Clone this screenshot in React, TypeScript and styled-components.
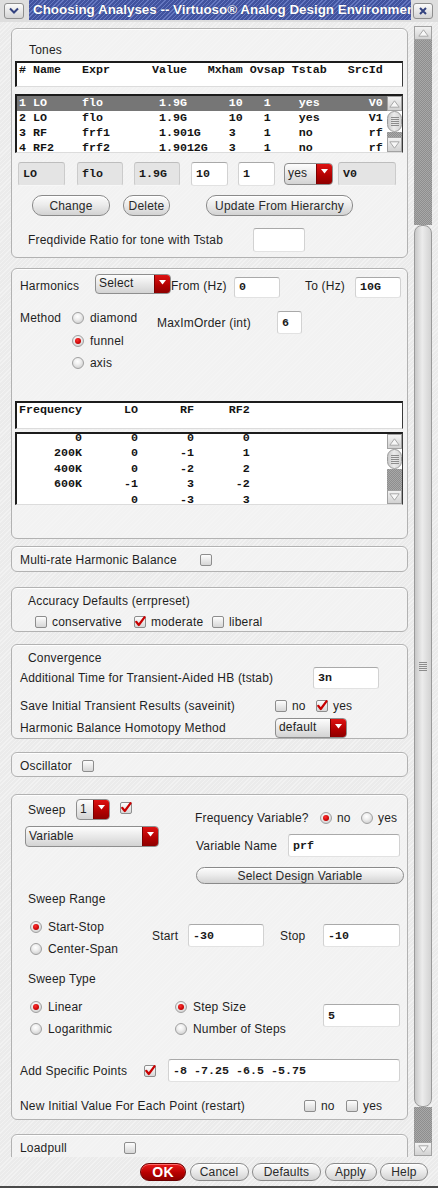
import React from 'react';
import styled, { createGlobalStyle } from 'styled-components';

const SANS = `"Liberation Sans", Arial, Helvetica, sans-serif`;
const MONO = `"Liberation Mono", "Courier New", monospace`;

const GlobalStyle = createGlobalStyle`
  html, body { margin: 0; padding: 0; }
  body { width: 438px; height: 1188px; overflow: hidden; background: #e9e9e9; font-family: ${SANS}; }
  *, *::before, *::after { box-sizing: border-box; }
`;

const Window = styled.div`
  width: 438px;
  height: 1188px;
  display: flex;
  flex-direction: column;
  background-color: #ebebeb;
  background-image: repeating-linear-gradient(135deg, rgba(255,255,255,0.35) 0 1px, transparent 1px 3px);
  border-bottom: 2px solid #4a4a4a;
  overflow: hidden;
`;

const TitleBar = styled.div`
  height: 22px;
  flex: none;
  display: flex;
  align-items: flex-start;
  padding-left: 4px;
  background: #dedede;
`;

const FrameBtn = styled.div<{ $ml?: number }>`
  margin-top: 3px;
  margin-left: ${p => p.$ml ?? 0}px;
  width: 20px;
  height: 16px;
  flex: none;
  border: 1px solid #8f8f8f;
  border-radius: 3px;
  background: linear-gradient(#fbfbfb, #d4d4d4);
  display: flex;
  align-items: center;
  justify-content: center;
`;

const TitleText = styled.div`
  margin-left: 5px;
  width: 382px;
  height: 20px;
  flex: none;
  background-color: #41539f;
  background-image: repeating-linear-gradient(135deg, #6577c0 0 1px, #41539f 1px 3px);
  color: #fff;
  font: bold 13.4px ${SANS};
  line-height: 20px;
  padding-left: 4px;
  white-space: nowrap;
  overflow: hidden;
  text-shadow: 0 0 1px #1d2a66;
`;

const Main = styled.div`
  display: flex;
  height: 1135px;
  flex: none;
`;

const Content = styled.div`
  width: 414px;
  flex: none;
  padding: 6px 0 0 11px;
  overflow: hidden;
  display: flex;
  flex-direction: column;
`;

const Group = styled.div<{ $mt: number; $h: number }>`
  flex: none;
  width: 397px;
  height: ${p => p.$h}px;
  margin-top: ${p => p.$mt}px;
  border: 1px solid #b2b2b2;
  border-radius: 6px;
  background: rgba(245, 245, 245, 0.7);
  box-shadow: inset 0 1px 0 rgba(255, 255, 255, 0.9);
  display: flex;
  flex-direction: column;
`;

const Row = styled.div<{ $mt?: number; $h: number; $pl?: number; $align?: string }>`
  display: flex;
  flex: none;
  align-items: ${p => p.$align ?? 'center'};
  margin-top: ${p => p.$mt ?? 0}px;
  height: ${p => p.$h}px;
  padding-left: ${p => p.$pl ?? 0}px;
`;

const Col = styled.div<{ $w?: number }>`
  display: flex;
  flex-direction: column;
  flex: none;
  ${p => (p.$w ? `width: ${p.$w}px;` : 'flex: 1;')}
`;

const Cell = styled.div<{ $w?: number; $h?: number; $mt?: number; $mb?: number }>`
  display: flex;
  align-items: center;
  flex: none;
  ${p => (p.$w ? `width: ${p.$w}px;` : '')}
  ${p => (p.$h ? `height: ${p.$h}px;` : '')}
  margin-top: ${p => p.$mt ?? 0}px;
  margin-bottom: ${p => p.$mb ?? 0}px;
`;

const Label = styled.span`
  font: 12px ${SANS};
  letter-spacing: 0.2px;
  color: #1f1f1f;
  white-space: nowrap;
`;

const Field = styled.div<{ $w: number; $h: number; $ro?: boolean }>`
  width: ${p => p.$w}px;
  height: ${p => p.$h}px;
  flex: none;
  background: ${p => (p.$ro ? '#e4e4e4' : '#ffffff')};
  border: 1px solid ${p => (p.$ro ? '#cbcbcb' : '#d2d2d2')};
  border-top-color: ${p => (p.$ro ? '#bdbdbd' : '#a9a9a9')};
  border-bottom-color: ${p => (p.$ro ? '#f7f7f7' : '#e2e2e2')};
  border-radius: 3px;
  font: bold 11.67px ${MONO};
  color: #1a1a1a;
  padding-left: 4px;
  display: flex;
  align-items: center;
  white-space: pre;
  overflow: hidden;
`;

const BoxEl = styled.span`
  width: 12px;
  height: 12px;
  flex: none;
  border: 1px solid #8d8d8d;
  border-radius: 2px;
  background: linear-gradient(#fdfdfd, #d6d6d6);
  display: inline-flex;
  align-items: center;
  justify-content: center;
  overflow: visible;
`;

const RadioEl = styled.span<{ $on?: boolean }>`
  width: 12px;
  height: 12px;
  flex: none;
  border-radius: 50%;
  border: 1px solid #a0a0a0;
  background: radial-gradient(circle at 45% 35%, #ffffff 0, #f0f0f0 35%, #c4c4c4 100%);
  display: inline-flex;
  align-items: center;
  justify-content: center;
  &::after {
    content: '';
    display: ${p => (p.$on ? 'block' : 'none')};
    width: 6px;
    height: 6px;
    border-radius: 50%;
    background: radial-gradient(circle at 40% 35%, #ff3030, #c00000 70%);
  }
`;

const Opt = styled.span<{ $gap?: number }>`
  display: inline-flex;
  align-items: center;
  gap: ${p => p.$gap ?? 5}px;
`;

const Btn = styled.div<{ $w: number; $h: number; $primary?: boolean }>`
  width: ${p => p.$w}px;
  height: ${p => p.$h}px;
  flex: none;
  border-radius: 10px;
  border: 1px solid ${p => (p.$primary ? '#6a0000' : '#8a8a8a')};
  background: ${p =>
    p.$primary
      ? 'linear-gradient(#ea1a1a, #b80000 55%, #8c0000)'
      : 'linear-gradient(#fcfcfc, #ececec 45%, #d2d2d2)'};
  box-shadow: inset 0 1px 0 ${p => (p.$primary ? '#ff6a6a' : '#ffffff')};
  display: flex;
  align-items: center;
  justify-content: center;
  font: ${p => (p.$primary ? 'bold 14px' : '12px')} ${SANS};
  letter-spacing: 0.2px;
  color: ${p => (p.$primary ? '#ffffff' : '#2a2a2a')};
  white-space: nowrap;
`;

const ComboEl = styled.div<{ $w: number; $h: number }>`
  width: ${p => p.$w}px;
  height: ${p => p.$h}px;
  flex: none;
  display: flex;
  border: 1px solid #8e8e8e;
  border-radius: 4px;
  overflow: hidden;
  background: linear-gradient(#fdfdfd, #e8e8e8 50%, #d3d3d3);
`;

const ComboText = styled.span`
  flex: 1;
  padding-left: 3px;
  padding-bottom: 2px;
  display: flex;
  align-items: center;
  font: 12px ${SANS};
  letter-spacing: 0.2px;
  color: #1f1f1f;
  white-space: nowrap;
  overflow: hidden;
`;

const ComboArrow = styled.span`
  width: 16px;
  flex: none;
  display: flex;
  align-items: flex-start;
  justify-content: center;
  padding-top: 5px;
  background: linear-gradient(#de1212, #b00000 60%, #8e0000);
  border-left: 1px solid #7a0000;
`;

const Sunken = styled.div<{ $mt: number; $h: number }>`
  margin-top: ${p => p.$mt}px;
  margin-left: 3px;
  width: 388px;
  height: ${p => p.$h}px;
  flex: none;
  display: flex;
  background: #ffffff;
  border-top: 2px solid #1c1c1c;
  border-left: 2px solid #1c1c1c;
  border-right: 1px solid #3a3a3a;
  border-bottom: 1px solid #dcdcdc;
  overflow: hidden;
`;

const ListRows = styled.div<{ $shift?: number }>`
  flex: 1;
  display: flex;
  flex-direction: column;
  overflow: hidden;
  margin-top: ${p => p.$shift ?? 0}px;
`;

const ListRow = styled.div<{ $sel?: boolean; $h: number }>`
  flex: none;
  height: ${p => p.$h}px;
  padding-left: 2px;
  white-space: pre;
  font: bold 11.67px ${MONO};
  line-height: ${p => p.$h}px;
  background: ${p => (p.$sel ? '#767676' : 'transparent')};
  color: ${p => (p.$sel ? '#ffffff' : '#141414')};
`;

const ScrollCol = styled.div<{ $w: number }>`
  width: ${p => p.$w}px;
  flex: none;
  display: flex;
  flex-direction: column;
`;

const ArrowBtn = styled.div<{ $h: number }>`
  height: ${p => p.$h}px;
  flex: none;
  border: 1px solid #a2a2a2;
  background: linear-gradient(#f2f2f2, #d2d2d2);
  display: flex;
  align-items: center;
  justify-content: center;
`;

const Trough = styled.div<{ $h?: number }>`
  ${p => (p.$h !== undefined ? `height: ${p.$h}px; flex: none;` : 'flex: 1;')}
  background: repeating-conic-gradient(#8e8e8e 0 25%, #a8a8a8 0 50%) 0 0 / 2px 2px;
`;

const Thumb = styled.div<{ $h: number }>`
  height: ${p => p.$h}px;
  flex: none;
  border: 1px solid #9a9a9a;
  border-radius: 8px;
  background: linear-gradient(90deg, #c8c8c8, #ececec 45%, #d2d2d2);
  display: flex;
  align-items: center;
  justify-content: center;
`;

const VScroll = styled.div`
  width: 18px;
  flex: none;
  margin-top: 4px;
  height: 1130px;
  display: flex;
  flex-direction: column;
`;

const Footer = styled.div`
  height: 29px;
  flex: none;
  display: flex;
  justify-content: flex-end;
  align-items: flex-start;
  padding: 6px 10px 0 0;
  gap: 3.5px;
`;

/* ---------- small drawings ---------- */

const CheckMark = () => (
  <svg width="12" height="12" viewBox="0 0 12 12" style={{ overflow: 'visible' }}>
    <path d="M2.2 5.8 L4.8 9 L10.6 1.2" fill="none" stroke="#c80000" strokeWidth="2.2" strokeLinecap="round" strokeLinejoin="round" />
  </svg>
);

const CheckBox = ({ on }: { on?: boolean }) => <BoxEl>{on && <CheckMark />}</BoxEl>;

const Radio = ({ on }: { on?: boolean }) => <RadioEl $on={on} />;

const DownTri = () => (
  <svg width="7" height="5" viewBox="0 0 7 5">
    <polygon points="0,0 7,0 3.5,4.5" fill="#ffffff" />
  </svg>
);

const Combo = ({ w, h, text }: { w: number; h: number; text: string }) => (
  <ComboEl $w={w} $h={h}>
    <ComboText>{text}</ComboText>
    <ComboArrow>
      <DownTri />
    </ComboArrow>
  </ComboEl>
);

const TriUp = () => (
  <svg width="11" height="8" viewBox="0 0 11 8">
    <polygon points="5.5,0.8 10.2,7.2 0.8,7.2" fill="#f7f7f7" stroke="#a9a9a9" strokeWidth="1" />
  </svg>
);
const TriDown = () => (
  <svg width="11" height="8" viewBox="0 0 11 8">
    <polygon points="0.8,0.8 10.2,0.8 5.5,7.2" fill="#f7f7f7" stroke="#a9a9a9" strokeWidth="1" />
  </svg>
);

const Grip = () => (
  <svg width="8" height="9" viewBox="0 0 8 9">
    {[0.5, 2.5, 4.5, 6.5, 8.5].map(y => (
      <line key={y} x1="0" x2="8" y1={y} y2={y} stroke="#8c8c8c" strokeWidth="1" />
    ))}
  </svg>
);

const MiniScroll = ({ up, thumb, before, down }: { up: number; thumb: number; before: number; down: number }) => (
  <ScrollCol $w={15}>
    <ArrowBtn $h={up}>
      <TriUp />
    </ArrowBtn>
    {before > 0 && <Trough $h={before} />}
    <Thumb $h={thumb}>
      <Grip />
    </Thumb>
    <Trough />
    <ArrowBtn $h={down}>
      <TriDown />
    </ArrowBtn>
  </ScrollCol>
);

/* ---------- data ---------- */

const place = (cols: [number, string][]) => {
  let s = '';
  for (const [c, t] of cols) s = s.padEnd(c, ' ') + t;
  return s;
};

const tonesHeader = place([
  [0, '#'], [2, 'Name'], [9, 'Expr'], [19, 'Value'], [27, 'Mxham'], [33, 'Ovsap'], [39, 'Tstab'], [47, 'SrcId'],
]);

const tones = [
  ['1', 'LO', 'flo', '1.9G', '10', '1', 'yes', 'V0'],
  ['2', 'LO', 'flo', '1.9G', '10', '1', 'yes', 'V1'],
  ['3', 'RF', 'frf1', '1.901G', '3', '1', 'no', 'rf'],
  ['4', 'RF2', 'frf2', '1.9012G', '3', '1', 'no', 'rf'],
].map(r => place([[0, r[0]], [2, r[1]], [9, r[2]], [20, r[3]], [30, r[4]], [35, r[5]], [40, r[6]], [50, r[7]]]));

const freqHeader = 'Frequency' + 'LO'.padStart(8) + 'RF'.padStart(8) + 'RF2'.padStart(8);
const freqRows = [
  ['0', '0', '0', '0'],
  ['200K', '0', '-1', '1'],
  ['400K', '0', '-2', '2'],
  ['600K', '-1', '3', '-2'],
  ['', '0', '-3', '3'],
].map(r => r[0].padStart(9) + r[1].padStart(8) + r[2].padStart(8) + r[3].padStart(8));

/* ---------- sections ---------- */

const TonesGroup = () => (
  <Group $mt={0} $h={230}>
    <Row $mt={14} $h={14} $pl={17}>
      <Label>Tones</Label>
    </Row>
    <Sunken $mt={4} $h={26}>
      <ListRows>
        <ListRow $h={14}>{tonesHeader}</ListRow>
      </ListRows>
    </Sunken>
    <Sunken $mt={7} $h={59}>
      <ListRows>
        {tones.map((t, i) => (
          <ListRow key={i} $h={15} $sel={i === 0}>
            {t}
          </ListRow>
        ))}
      </ListRows>
      <MiniScroll up={15} before={0} thumb={21} down={15} />
    </Sunken>
    <Row $mt={9} $h={24} $pl={6}>
      <Cell $w={59}><Field $w={47} $h={24} $ro>LO</Field></Cell>
      <Cell $w={57}><Field $w={46} $h={24} $ro>flo</Field></Cell>
      <Cell $w={57}><Field $w={46} $h={24} $ro>1.9G</Field></Cell>
      <Cell $w={47}><Field $w={37} $h={24}>10</Field></Cell>
      <Cell $w={46}><Field $w={37} $h={24}>1</Field></Cell>
      <Cell $w={54}><Combo w={49} h={22} text="yes" /></Cell>
      <Field $w={58} $h={24} $ro>V0</Field>
    </Row>
    <Row $mt={9} $h={21} $pl={20}>
      <Cell $w={91}><Btn $w={78} $h={21}>Change</Btn></Cell>
      <Cell $w={83}><Btn $w={47} $h={21}>Delete</Btn></Cell>
      <Btn $w={147} $h={21}>Update From Hierarchy</Btn>
    </Row>
    <Row $mt={12} $h={24} $pl={16}>
      <Cell $w={225}><Label>Freqdivide Ratio for tone with Tstab</Label></Cell>
      <Field $w={52} $h={24} />
    </Row>
  </Group>
);

const HarmonicsGroup = () => (
  <Group $mt={10} $h={271}>
    <Row $mt={5} $h={24} $pl={8}>
      <Cell $w={75}><Label>Harmonics</Label></Cell>
      <Cell $w={76} $mb={4}><Combo w={76} h={20} text="Select" /></Cell>
      <Cell $w={63}><Label>From (Hz)</Label></Cell>
      <Cell $w={71} $mt={2}><Field $w={46} $h={21}>0</Field></Cell>
      <Cell $w={50}><Label>To (Hz)</Label></Cell>
      <Cell $mt={2}><Field $w={46} $h={21}>10G</Field></Cell>
    </Row>
    <Row $mt={9} $h={67} $pl={8} $align="flex-start">
      <Cell $w={52} $h={22}><Label>Method</Label></Cell>
      <Col $w={85}>
        <Cell $h={22.5}><Opt $gap={6}><Radio /><Label>diamond</Label></Opt></Cell>
        <Cell $h={22.5}><Opt $gap={6}><Radio on /><Label>funnel</Label></Opt></Cell>
        <Cell $h={22.5}><Opt $gap={6}><Radio /><Label>axis</Label></Opt></Cell>
      </Col>
      <Cell $w={120} $h={23} $mt={4}><Label>MaxImOrder (int)</Label></Cell>
      <Cell $mt={4}><Field $w={25} $h={23}>6</Field></Cell>
    </Row>
    <Sunken $mt={27} $h={28}>
      <ListRows>
        <ListRow $h={14}>{freqHeader}</ListRow>
      </ListRows>
    </Sunken>
    <Sunken $mt={3} $h={73}>
      <ListRows $shift={-3}>
        {freqRows.map((r, i) => (
          <ListRow key={i} $h={15.4}>
            {r}
          </ListRow>
        ))}
      </ListRows>
      <MiniScroll up={15} before={0} thumb={20} down={14} />
    </Sunken>
  </Group>
);

const MultiRateGroup = () => (
  <Group $mt={7} $h={26}>
    <Row $mt={2} $h={22} $pl={8}>
      <Cell $w={180}><Label>Multi-rate Harmonic Balance</Label></Cell>
      <CheckBox />
    </Row>
  </Group>
);

const AccuracyGroup = () => (
  <Group $mt={15} $h={45}>
    <Row $mt={6} $h={14} $pl={16}>
      <Label>Accuracy Defaults (errpreset)</Label>
    </Row>
    <Row $mt={7} $h={14} $pl={23}>
      <Cell $w={99}><Opt><CheckBox /><Label>conservative</Label></Opt></Cell>
      <Cell $w={78}><Opt><CheckBox on /><Label>moderate</Label></Opt></Cell>
      <Opt><CheckBox /><Label>liberal</Label></Opt>
    </Row>
  </Group>
);

const ConvergenceGroup = () => (
  <Group $mt={12} $h={95}>
    <Row $mt={6} $h={14} $pl={16}>
      <Label>Convergence</Label>
    </Row>
    <Row $mt={2} $h={22} $pl={8}>
      <Cell $w={293}><Label>Additional Time for Transient-Aided HB (tstab)</Label></Cell>
      <Field $w={66} $h={22}>3n</Field>
    </Row>
    <Row $mt={10} $h={14} $pl={8}>
      <Cell $w={255}><Label>Save Initial Transient Results (saveinit)</Label></Cell>
      <Cell $w={41}><Opt><CheckBox /><Label>no</Label></Opt></Cell>
      <Opt><CheckBox on /><Label>yes</Label></Opt>
    </Row>
    <Row $mt={5} $h={20} $pl={8}>
      <Cell $w={255}><Label>Harmonic Balance Homotopy Method</Label></Cell>
      <Combo w={72} h={20} text="default" />
    </Row>
  </Group>
);

const OscillatorGroup = () => (
  <Group $mt={13} $h={25}>
    <Row $mt={1} $h={23} $pl={8}>
      <Cell $w={62}><Label>Oscillator</Label></Cell>
      <CheckBox />
    </Row>
  </Group>
);

const SweepGroup = () => (
  <Group $mt={17} $h={326}>
    <Row $h={89} $align="flex-start">
      <Col $w={183}>
        <Row $mt={4} $h={21} $pl={16}>
          <Cell $w={48}><Label>Sweep</Label></Cell>
          <Cell $w={44}><Combo w={34} h={21} text="1" /></Cell>
          <Cell $mb={3}><CheckBox on /></Cell>
        </Row>
        <Row $mt={6} $h={21} $pl={13}>
          <Combo w={134} h={21} text="Variable" />
        </Row>
      </Col>
      <Col>
        <Row $mt={16} $h={14}>
          <Cell $w={125}><Label>Frequency Variable?</Label></Cell>
          <Cell $w={41}><Opt><Radio on /><Label>no</Label></Opt></Cell>
          <Opt><Radio /><Label>yes</Label></Opt>
        </Row>
        <Row $mt={9} $h={23} $pl={1}>
          <Cell $w={92}><Label>Variable Name</Label></Cell>
          <Field $w={112} $h={23}>prf</Field>
        </Row>
        <Row $mt={10} $h={17} $pl={1}>
          <Btn $w={208} $h={17}>Select Design Variable</Btn>
        </Row>
      </Col>
    </Row>
    <Row $mt={8} $h={14} $pl={16}>
      <Label>Sweep Range</Label>
    </Row>
    <Row $mt={10} $h={44} $pl={18} $align="flex-start">
      <Col $w={122}>
        <Cell $h={22}><Opt $gap={6}><Radio on /><Label>Start-Stop</Label></Opt></Cell>
        <Cell $h={22}><Opt $gap={6}><Radio /><Label>Center-Span</Label></Opt></Cell>
      </Col>
      <Cell $w={36} $h={23} $mt={8}><Label>Start</Label></Cell>
      <Cell $w={92} $mt={8}><Field $w={76} $h={23}>-30</Field></Cell>
      <Cell $w={43} $h={23} $mt={8}><Label>Stop</Label></Cell>
      <Cell $mt={8}><Field $w={77} $h={23}>-10</Field></Cell>
    </Row>
    <Row $mt={12} $h={14} $pl={16}>
      <Label>Sweep Type</Label>
    </Row>
    <Row $mt={10} $h={44} $pl={18} $align="flex-start">
      <Col $w={145}>
        <Cell $h={22}><Opt $gap={6}><Radio on /><Label>Linear</Label></Opt></Cell>
        <Cell $h={22}><Opt $gap={6}><Radio /><Label>Logarithmic</Label></Opt></Cell>
      </Col>
      <Col $w={148}>
        <Cell $h={22}><Opt $gap={6}><Radio on /><Label>Step Size</Label></Opt></Cell>
        <Cell $h={22}><Opt $gap={6}><Radio /><Label>Number of Steps</Label></Opt></Cell>
      </Col>
      <Cell $mt={8}><Field $w={77} $h={23}>5</Field></Cell>
    </Row>
    <Row $mt={19} $h={23} $pl={8}>
      <Cell $w={124}><Label>Add Specific Points</Label></Cell>
      <Cell $w={24}><CheckBox on /></Cell>
      <Field $w={232} $h={23}>-8 -7.25 -6.5 -5.75</Field>
    </Row>
    <Row $mt={17} $h={14} $pl={8}>
      <Cell $w={284}><Label>New Initial Value For Each Point (restart)</Label></Cell>
      <Cell $w={42}><Opt><CheckBox /><Label>no</Label></Opt></Cell>
      <Opt><CheckBox /><Label>yes</Label></Opt>
    </Row>
  </Group>
);

const LoadpullGroup = () => (
  <Group $mt={14} $h={40}>
    <Row $mt={6} $h={14} $pl={8}>
      <Cell $w={104}><Label>Loadpull</Label></Cell>
      <CheckBox />
    </Row>
  </Group>
);

export default function App() {
  return (
    <>
      <GlobalStyle />
      <Window>
        <TitleBar>
          <FrameBtn>
            <svg width="12" height="8" viewBox="0 0 12 8">
              <path d="M2 1.5 L6 5.5 L10 1.5" fill="none" stroke="#33427f" strokeWidth="2" />
            </svg>
          </FrameBtn>
          <TitleText>Choosing Analyses -- Virtuoso® Analog Design Environment</TitleText>
          <FrameBtn $ml={2}>
            <svg width="10" height="10" viewBox="0 0 10 10">
              <path d="M2 2 L8 8 M8 2 L2 8" fill="none" stroke="#33427f" strokeWidth="2" />
            </svg>
          </FrameBtn>
        </TitleBar>
        <Main>
          <Content>
            <TonesGroup />
            <HarmonicsGroup />
            <MultiRateGroup />
            <AccuracyGroup />
            <ConvergenceGroup />
            <OscillatorGroup />
            <SweepGroup />
            <LoadpullGroup />
          </Content>
          <VScroll>
            <ArrowBtn $h={14}>
              <TriUp />
            </ArrowBtn>
            <Trough $h={185} />
            <Thumb $h={882}>
              <Grip />
            </Thumb>
            <Trough />
            <ArrowBtn $h={14}>
              <TriDown />
            </ArrowBtn>
          </VScroll>
        </Main>
        <Footer>
          <Btn $w={46} $h={18} $primary>OK</Btn>
          <Btn $w={59} $h={18}>Cancel</Btn>
          <Btn $w={69} $h={18}>Defaults</Btn>
          <Btn $w={52} $h={18}>Apply</Btn>
          <Btn $w={48} $h={18}>Help</Btn>
        </Footer>
      </Window>
    </>
  );
}
